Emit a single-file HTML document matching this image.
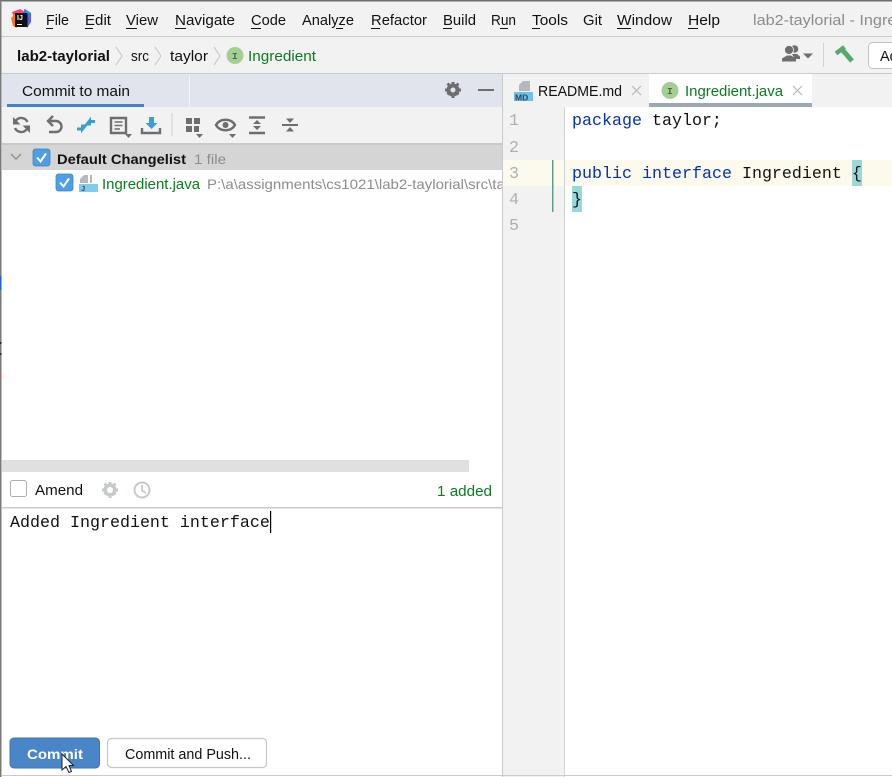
<!DOCTYPE html>
<html><head><meta charset="utf-8"><title>Commit</title>
<style>
html,body{margin:0;padding:0;background:#fff;width:892px;height:777px;overflow:hidden}
svg{display:block}
text{font-family:"Liberation Sans",sans-serif;font-size:14.5px;fill:#111}
.m{font-family:"Liberation Mono",monospace;font-size:16.67px}
.g{fill:#0a7d1e}
.kw{fill:#0033b3}
.n{fill:#b0b0b0}
</style></head><body>
<svg width="892" height="777" viewBox="0 0 892 777" xmlns="http://www.w3.org/2000/svg">
<!-- backgrounds -->
<rect width="892" height="777" fill="#fff"/>
<rect width="892" height="73" fill="#f2f2f2"/>
<rect width="892" height="1.5" fill="#6e6e6e"/>
<rect y="36" width="892" height="1" fill="#cacaca"/>
<rect y="73" width="892" height="1" fill="#cacaca"/>
<!-- left tool header -->
<rect x="2" y="74" width="500" height="33" fill="#e1e4ed"/>
<rect x="189" y="74" width="1" height="33" fill="#f2f3f7"/>
<rect x="7" y="104" width="137" height="3" fill="#4083c9"/>
<rect x="2" y="107" width="500" height="36" fill="#f2f2f2"/>
<rect x="2" y="143" width="500" height="2" fill="#c9c9c9"/>
<rect x="2" y="145" width="500" height="25" fill="#d5d5d5"/>
<rect x="2" y="460" width="467" height="12" fill="#e0e0e0"/>
<rect x="2" y="507" width="500" height="1.5" fill="#cacaca"/>
<rect x="2" y="775" width="500" height="1" fill="#cacaca"/>
<rect x="502" y="74" width="1" height="703" fill="#c9c9c9"/>
<!-- right tabs and gutter -->
<rect x="503" y="74" width="389" height="33" fill="#f2f2f2"/>
<rect x="649" y="74" width="163" height="29" fill="#fff"/>
<rect x="649" y="103" width="163" height="4" fill="#9ca7b8"/>
<rect x="503" y="107" width="62" height="670" fill="#f2f2f2"/>
<rect x="564" y="107" width="1" height="670" fill="#d2d2d2"/>
<rect x="503" y="160" width="61" height="26" fill="#fcfaed"/>
<rect x="565" y="160" width="327" height="26" fill="#fcfaed"/>
<rect x="552" y="160" width="1.5" height="52" fill="#5f9d8f"/>
<rect x="852" y="160" width="10" height="26" fill="#99d8d8"/>
<rect x="572" y="186" width="10" height="26" fill="#99d8d8"/>
<rect x="503" y="775" width="389" height="1" fill="#cacaca"/>
<!-- left window edge -->
<rect x="0" y="0" width="1.5" height="777" fill="#7a7a7a"/>
<rect x="0" y="276" width="1.5" height="14" fill="#1a66c8"/>
<rect x="0" y="342" width="1.5" height="2" fill="#222"/>
<rect x="0" y="353" width="1.5" height="2" fill="#222"/>
<rect x="0" y="376" width="1.5" height="2" fill="#c8604a"/>

<!-- app logo -->
<path d="M12 12 L20 9 L25 12 L15 21Z" fill="#f0447c"/>
<path d="M11 18 L15 14 L17 28 L13 26Z" fill="#f97a12"/>
<path d="M24 9 L31 13 L31 22 L27 28 L24 20Z" fill="#5a5df0"/>
<path d="M25 9 L31 13 L27 15Z" fill="#10a0f0"/>
<rect x="15" y="13" width="12.500" height="14" fill="#111"/>
<text x="17" y="20" style="font-size:7px;font-weight:bold;fill:#fff">IJ</text>
<rect x="17" y="24" width="5" height="1" fill="#fff"/>

<!-- menu -->
<g>
<text x="46" y="25" textLength="23" lengthAdjust="spacingAndGlyphs">File</text><rect x="46" y="28" width="7" height="1" fill="#111"/>
<text x="85" y="25" textLength="26" lengthAdjust="spacingAndGlyphs">Edit</text><rect x="85" y="28" width="8" height="1" fill="#111"/>
<text x="126" y="25" textLength="32" lengthAdjust="spacingAndGlyphs">View</text><rect x="126" y="28" width="11" height="1" fill="#111"/>
<text x="175" y="25" textLength="60" lengthAdjust="spacingAndGlyphs">Navigate</text><rect x="175" y="28" width="11" height="1" fill="#111"/>
<text x="251" y="25" textLength="35" lengthAdjust="spacingAndGlyphs">Code</text><rect x="251" y="28" width="10" height="1" fill="#111"/>
<text x="302" y="25" textLength="52" lengthAdjust="spacingAndGlyphs">Analyze</text><rect x="336" y="28" width="7" height="1" fill="#111"/>
<text x="371" y="25" textLength="56" lengthAdjust="spacingAndGlyphs">Refactor</text><rect x="371" y="28" width="9" height="1" fill="#111"/>
<text x="443" y="25" textLength="33" lengthAdjust="spacingAndGlyphs">Build</text><rect x="443" y="28" width="9" height="1" fill="#111"/>
<text x="491" y="25" textLength="25" lengthAdjust="spacingAndGlyphs">Run</text><rect x="500" y="28" width="8" height="1" fill="#111"/>
<text x="532" y="25" textLength="36" lengthAdjust="spacingAndGlyphs">Tools</text><rect x="532" y="28" width="8" height="1" fill="#111"/>
<text x="583" y="25" textLength="19" lengthAdjust="spacingAndGlyphs">Git</text>
<text x="617" y="25" textLength="55" lengthAdjust="spacingAndGlyphs">Window</text><rect x="617" y="28" width="14" height="1" fill="#111"/>
<text x="688" y="25" textLength="32" lengthAdjust="spacingAndGlyphs">Help</text><rect x="688" y="28" width="10" height="1" fill="#111"/>
<text x="753" y="25" style="fill:#8c8c8c" textLength="156" lengthAdjust="spacingAndGlyphs">lab2-taylorial - Ingredi</text>
</g>

<!-- breadcrumb -->
<text x="17" y="61" style="font-weight:bold" textLength="93" lengthAdjust="spacingAndGlyphs">lab2-taylorial</text>
<path d="M116 47 L122 56 L116 65" fill="none" stroke="#c4c4c4" stroke-width="1"/>
<text x="131" y="61" textLength="18" lengthAdjust="spacingAndGlyphs">src</text>
<path d="M155 47 L161 56 L155 65" fill="none" stroke="#c4c4c4" stroke-width="1"/>
<text x="170" y="61" textLength="38" lengthAdjust="spacingAndGlyphs">taylor</text>
<path d="M214 47 L220 56 L214 65" fill="none" stroke="#c4c4c4" stroke-width="1"/>
<circle cx="235" cy="55.500" r="8.500" fill="#a4cf94"/>
<text x="232" y="59" style="font-family:'Liberation Mono',monospace;font-size:9.500px;font-weight:bold;fill:#4d6b48">I</text>
<text x="248" y="61" class="g" textLength="68" lengthAdjust="spacingAndGlyphs">Ingredient</text>

<!-- top right -->
<g fill="#6e6e6e">
<circle cx="794.500" cy="49" r="3.800"/>
<path d="M792 54 H797 L800 56.500 V59 H795Z"/>
<circle cx="789" cy="50" r="4.500" stroke="#f2f2f2" stroke-width="0.800"/>
<path d="M782 61.500 V58.500 L787 55.500 H791 L796 58.500 V61.500Z"/>
<path d="M803 53.500 H813 L808 58.500Z"/>
</g>
<rect x="823" y="43" width="1" height="24" fill="#d2d2d2"/>
<path d="M843 50.500 L852 61" fill="none" stroke="#59a869" stroke-width="5"/>
<path d="M836 53.500 L844.500 47" fill="none" stroke="#59a869" stroke-width="4.500"/>
<rect x="868.500" y="42.500" width="40" height="26" rx="4" fill="#fff" stroke="#c4c4c4"/>
<text x="880" y="61">Ad</text>

<!-- panel header -->
<text x="22" y="96" textLength="108" lengthAdjust="spacingAndGlyphs">Commit to main</text>
<g fill="#6e6e6e">
<circle cx="453" cy="90" r="4.500" fill="none" stroke="#6e6e6e" stroke-width="4"/>
<path d="M451.500 82 h3 v3 h-3z M451.500 95 h3 v3 h-3z M445 88.500 h3 v3 h-3z M458 88.500 h3 v3 h-3z"/>
<path d="M446.500 84.500 l2 -2 l2.500 2.500 l-2 2z M455 93 l2 -2 l2.500 2.500 l-2 2z M457.500 82.500 l2 2 l-2.500 2.500 l-2 -2z M448.500 95.500 l-2 -2 l2.500 -2.500 l2 2z"/>
<rect x="478" y="89" width="16" height="2"/>
</g>

<!-- toolbar -->
<g fill="none" stroke="#6e6e6e" stroke-width="2.400">
<path d="M27.500 122 A6.800 6.800 0 0 0 16 120.500"/><path d="M15 128 A6.800 6.800 0 0 0 26.500 129.500"/>
<path d="M50 121 H56 A5.500 5.500 0 0 1 56 132 H49"/><path d="M53 116 L48 121 L53 126"/>
<path d="M111 118 H126 V133 H111Z"/>
<path d="M114.500 122 H122.500 M114.500 125.500 H122.500 M114.500 129 H120" stroke-width="1.400"/>
<path d="M142 128 V133 H160 V128"/>
<path d="M172 113 V136" stroke="#d0d0d0" stroke-width="1"/>
<path d="M216 125 C220 118 231 118 235 125 C231 132 220 132 216 125Z"/>
<path d="M249 117.500 H265 M249 133 H265"/>
<path d="M282 125 H298" stroke-width="2"/>
</g>
<g fill="#6e6e6e">
<path d="M13 117 V124.500 H20.500Z"/>
<path d="M30 133 V125.500 H22.500Z"/>
<path d="M125 134 H132 L128.500 138Z"/>
<rect x="186" y="118" width="6" height="6"/><rect x="194" y="118" width="6" height="6"/>
<rect x="186" y="126" width="6" height="6"/><rect x="194" y="126" width="5" height="6"/>
<path d="M196 134 H203 L199.500 138Z"/>
<circle cx="225.500" cy="125" r="3"/>
<path d="M229 134 H236 L232.500 138Z"/>
<path d="M257 120 L261 124 H253Z M257 130 L253 126 H261Z"/>
<path d="M290 123 L286 118.500 H294Z M290 127 L294 131.500 H286Z"/>
</g>
<g fill="#389fd6">
<path d="M90 120 H95 V123 H90Z"/>
<path d="M91 116.500 V125.500 H84Z"/>
<path d="M77 127.500 H82 V130.500 H77Z"/>
<path d="M81 124.500 H88 L81 133.500Z"/>
<path d="M149 117 H154 V123 H157.500 L151.500 129 L145.500 123 H149Z"/>
</g>

<!-- change list -->
<path d="M11 154 L16 159 L21 154" fill="none" stroke="#8c8c8c" stroke-width="1.300"/>
<rect x="33" y="149" width="17" height="17" rx="2.500" fill="#4f9ee3" stroke="#3d84c6" stroke-width="0.800"/>
<path d="M37 157.500 L40.500 161.500 L46 153.500" fill="none" stroke="#fff" stroke-width="2"/>
<text x="57" y="164" style="font-weight:bold;font-size:14px" textLength="129" lengthAdjust="spacingAndGlyphs">Default Changelist</text>
<text x="194" y="164" style="fill:#8c8c8c;font-size:14px" textLength="32" lengthAdjust="spacingAndGlyphs">1 file</text>

<rect x="56" y="174" width="17" height="17" rx="2.500" fill="#4f9ee3" stroke="#3d84c6" stroke-width="0.800"/>
<path d="M60 182.500 L63.500 186.500 L69 178.500" fill="none" stroke="#fff" stroke-width="2"/>
<path d="M84 175 H88 V183 H80 V179Z" fill="#b5b9bd"/>
<path d="M90 175 H92 V183 H90Z" fill="#b5b9bd"/>
<rect x="79" y="184" width="19" height="8" fill="#7fcdee"/>
<text x="81" y="191" style="font-size:7.500px;font-weight:bold;fill:#3c4a52">J</text>
<text x="102" y="189" class="g" textLength="98" lengthAdjust="spacingAndGlyphs">Ingredient.java</text>
<svg x="0" y="170" width="502" height="30"><text x="207" y="19" style="fill:#8c8c8c;font-size:14px" textLength="322" lengthAdjust="spacingAndGlyphs">P:\a\assignments\cs1021\lab2-taylorial\src\taylor</text></svg>

<!-- amend -->
<rect x="10.500" y="480.500" width="16" height="16" rx="2" fill="#fff" stroke="#b0b0b0"/>
<text x="35" y="495" textLength="48" lengthAdjust="spacingAndGlyphs">Amend</text>
<g fill="#c6cacc">
<circle cx="110" cy="490" r="4.800" fill="none" stroke="#c6cacc" stroke-width="3.500"/>
<path d="M108.500 482 h3 v3 h-3z M108.500 495 h3 v3 h-3z M102 488.500 h3 v3 h-3z M115 488.500 h3 v3 h-3z"/>
<path d="M103.500 484.500 l2 -2 l2.500 2.500 l-2 2z M112 493 l2 -2 l2.500 2.500 l-2 2z M114.500 482.500 l2 2 l-2.500 2.500 l-2 -2z M105.500 495.500 l-2 -2 l2.500 -2.500 l2 2z"/>
</g>
<circle cx="142" cy="490" r="7.500" fill="none" stroke="#c6cacc" stroke-width="2"/>
<path d="M142 485 V490.500 L146 493" fill="none" stroke="#c6cacc" stroke-width="1.800"/>
<text x="437" y="496" class="g" textLength="55" lengthAdjust="spacingAndGlyphs">1 added</text>

<!-- commit message -->
<text x="10" y="527" class="m" xml:space="preserve">Added Ingredient interface</text>
<rect x="270" y="511" width="1.200" height="22" fill="#000"/>

<!-- buttons -->
<rect x="10" y="738" width="89.500" height="30" rx="4" fill="#4a86c7" stroke="#3d75b0"/>
<text x="27" y="759" style="font-weight:bold;fill:#fff;font-size:14px" textLength="56" lengthAdjust="spacingAndGlyphs">Commit</text>
<rect x="107.500" y="738.500" width="159" height="29" rx="4" fill="#fff" stroke="#c6c6c6" stroke-width="1.200"/>
<text x="125" y="759" textLength="126" lengthAdjust="spacingAndGlyphs">Commit and Push...</text>
<path d="M62 754 V770 L66 766.500 L69 772.500 L71.500 771.500 L69 765.500 L73.500 765.500Z" fill="#fff" stroke="#222" stroke-width="1"/>

<!-- tabs -->
<path d="M523 81 H530 V91 H519 V85Z" fill="#b5b9bd"/>
<rect x="514" y="92" width="19" height="9" fill="#6ec0e8"/>
<text x="515" y="100.500" style="font-size:8.500px;font-weight:bold;fill:#2f4a5a">MD</text>
<text x="538" y="96" textLength="84" lengthAdjust="spacingAndGlyphs">README.md</text>
<path d="M632 86 L641 95 M641 86 L632 95" stroke="#b8b8b8" stroke-width="1.200"/>
<circle cx="670" cy="90.500" r="8.500" fill="#a4cf94"/>
<text x="667" y="94" style="font-family:'Liberation Mono',monospace;font-size:9.500px;font-weight:bold;fill:#4d6b48">I</text>
<text x="685" y="96" class="g" textLength="98" lengthAdjust="spacingAndGlyphs">Ingredient.java</text>
<path d="M793 86 L802 95 M802 86 L793 95" stroke="#b8b8b8" stroke-width="1.200"/>

<!-- code -->
<g class="m">
<text x="509" y="125" class="m n">1</text>
<text x="509" y="152" class="m n">2</text>
<text x="509" y="178" class="m n">3</text>
<text x="509" y="204" class="m n">4</text>
<text x="509" y="230" class="m n">5</text>
<text x="572" y="125" class="m"><tspan class="kw">package</tspan> taylor;</text>
<text x="572" y="178" class="m" xml:space="preserve"><tspan class="kw">public</tspan> <tspan class="kw">interface</tspan> Ingredient {</text>
<text x="572" y="204" class="m">}</text>
</g>
</svg>
</body></html>
